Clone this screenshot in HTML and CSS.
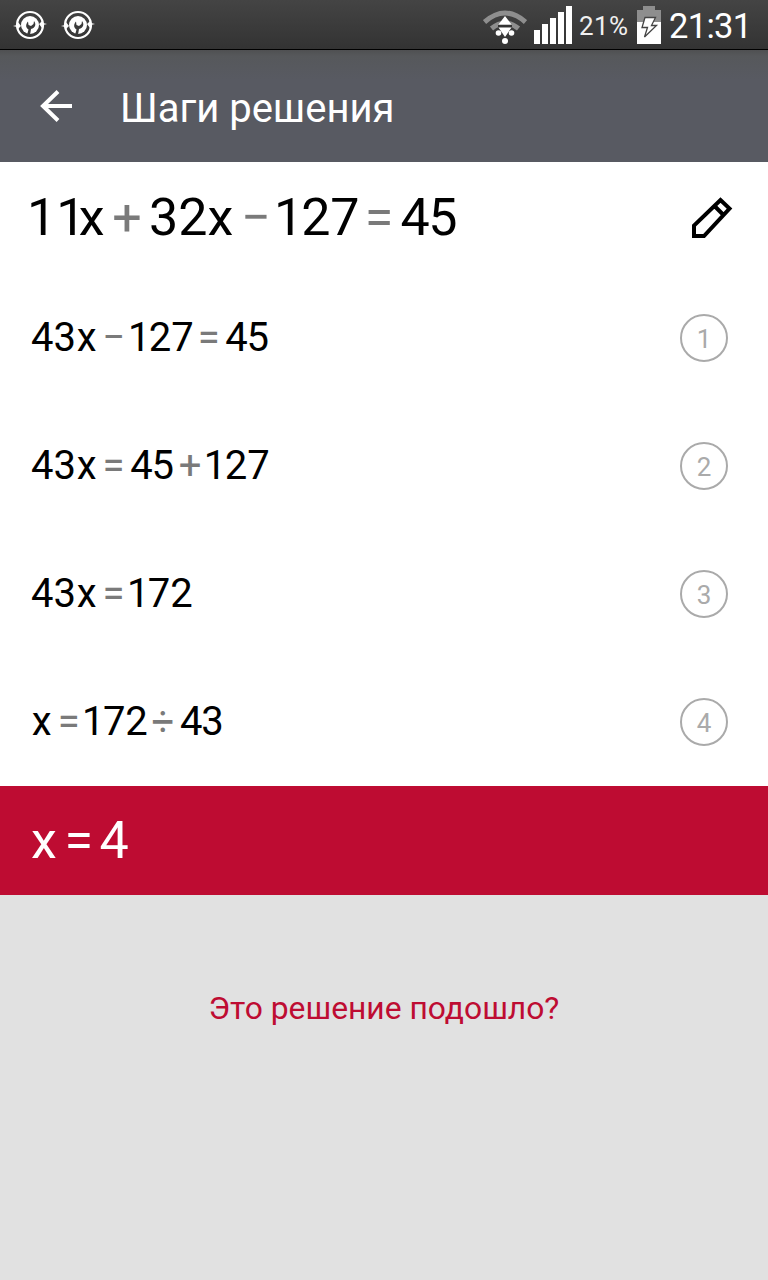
FILE: index.html
```html
<!DOCTYPE html>
<html lang="ru">
<head>
  <meta charset="UTF-8">
  <title>Шаги решения</title>
  <meta name="viewport" content="width=device-width, initial-scale=1.0">
  <link rel="stylesheet" href="styles.css">
</head>
<body>
  <div class="statusbar">
    <div class="notifications">
      <svg class="notif" viewBox="0 0 36 32" width="36" height="32">
        <circle cx="18" cy="16" r="13" fill="none" stroke="#fff" stroke-width="2.2"/>
        <path d="M1 17l4-1 1-3 3 4-3 3-1-2zM35 15l-4 1-1 3-3-4 3-3 1 2z" fill="#fff"/>
        <circle cx="18" cy="16" r="9" fill="#fff"/>
        <path d="M15 26l1.500-5.500c-3-2-3-5-.5-8l.5 3.500 2.500 1 2.500-2 .5-3c2.500 3 1.500 7-3 8l-1 6z" fill="#3a3a3a"/>
      </svg>
      <svg class="notif" viewBox="0 0 36 32" width="36" height="32">
        <circle cx="18" cy="16" r="13" fill="none" stroke="#fff" stroke-width="2.2"/>
        <path d="M1 17l4-1 1-3 3 4-3 3-1-2zM35 15l-4 1-1 3-3-4 3-3 1 2z" fill="#fff"/>
        <circle cx="18" cy="16" r="9" fill="#fff"/>
        <path d="M15 26l1.500-5.500c-3-2-3-5-.5-8l.5 3.500 2.500 1 2.500-2 .5-3c2.500 3 1.500 7-3 8l-1 6z" fill="#3a3a3a"/>
      </svg>
    </div>
    <div class="indicators">
      <svg class="wifi" viewBox="0 0 44 36" width="44" height="36">
        <path d="M1.500 14q20.500-18 41 0" fill="none" stroke="#8e8e8e" stroke-width="5"/>
        <path d="M8.500 20.500q13.500-11 27 0" fill="none" stroke="#8e8e8e" stroke-width="5"/>
        <path d="M22 8l6.500 8.500h-13zM22 29l-6.500-9.500h13z" fill="#fff"/>
        <path d="M15 17h14v2h-14z" fill="#333"/>
        <circle cx="15.500" cy="25" r="2.800" fill="#fff"/>
        <circle cx="28.500" cy="25" r="2.800" fill="#fff"/>
        <circle cx="22" cy="33" r="3" fill="#fff"/>
      </svg>
      <svg class="signal" viewBox="0 0 38 38" width="38" height="38">
        <path d="M0 24h6v14H0zM8 18h6v20H8zM16 12h6v26h-6zM24 6h6v32h-6zM32 0h6v38h-6z" fill="#fff"/>
      </svg>
      <span class="percent">21%</span>
      <svg class="battery" viewBox="0 0 24 38" width="24" height="38">
        <path d="M6 0h12v4h6v12H0V4h6z" fill="#8e8e8e"/>
        <path d="M0 16h24v22H0z" fill="#fff"/>
        <path d="M8 11.500h10.500l-4 8h5L7.500 31l3-9.500H5z" fill="#fff" stroke="#444" stroke-width="1.300"/>
      </svg>
      <span class="clock">21:31</span>
    </div>
  </div>

  <header class="toolbar">
    <svg class="back" viewBox="0 0 32 32" width="32" height="32">
      <path d="M18 1.500L3 16l15 14.500M2.500 16H32" fill="none" stroke="#fff" stroke-width="4"/>
    </svg>
    <h1>Шаги решения</h1>
  </header>

  <main>
    <div class="problem">
      <div class="expr"><span>1<b class="tight">1</b>x</span><i class="op plus">+</i><span>32x</span><i class="op before-one">−</i><span><b class="one">1</b>27</span><i class="op after-seven">=</i><span class="narrow">45</span></div>
      <svg class="edit" viewBox="0 0 42 42" width="42" height="42">
        <path d="M3 39V28.500L29.500 3l9 8.500L13 39zM23.500 9l9 9" fill="none" stroke="#000" stroke-width="4"/>
      </svg>
    </div>
    <div class="step">
      <div class="expr"><span>43<b class="var">x</b></span><i class="op before-one">−</i><span><b class="one">1</b>27</span><i class="op after-seven">=</i><span class="narrow">45</span></div>
      <div class="num">1</div>
    </div>
    <div class="step">
      <div class="expr"><span>43<b class="var">x</b></span><i class="op">=</i><span class="narrow">45</span><i class="op before-one">+</i><span><b class="one">1</b>27</span></div>
      <div class="num">2</div>
    </div>
    <div class="step">
      <div class="expr"><span>43<b class="var">x</b></span><i class="op before-one">=</i><span><b class="one">1</b>72</span></div>
      <div class="num">3</div>
    </div>
    <div class="step">
      <div class="expr"><span><b class="var">x</b></span><i class="op before-one">=</i><span><b class="one">1</b>72</span><i class="op div">÷</i><span class="narrow">43</span></div>
      <div class="num">4</div>
    </div>
    <div class="result">
      <div class="expr"><span>x</span><i class="op">=</i><span>4</span></div>
    </div>
  </main>

  <a class="feedback">Это решение подошло?</a>
</body>
</html>
```
FILE: styles.css
```css
* {
  box-sizing: border-box;
}
body {
  margin: 0;
  background: #e1e1e1;
  font-family: Roboto, "Noto Sans", sans-serif;
  color: #000;
}
svg {
  display: block;
  flex: none;
}

/* status bar */
.statusbar {
  height: 50px;
  display: flex;
  justify-content: space-between;
  background: linear-gradient(#444, #333);
  border-bottom: 1px solid #000;
  color: #fff;
}
.notifications {
  display: flex;
  gap: 12px;
  padding: 9px 0 0 12px;
}
.indicators {
  display: flex;
  padding: 6px 0 0;
}
.wifi {
  margin: 2px 7px 0 0;
}
.percent {
  width: 50px;
  font-size: 26px;
  line-height: 41px;
  letter-spacing: .4px;
  margin-left: 7px;
  color: #f0f0f0;
}
.battery {
  margin-left: 8px;
}
.clock {
  width: 99px;
  font-size: 34.5px;
  line-height: 41px;
  letter-spacing: -.7px;
  margin-left: 8px;
}

/* toolbar */
.toolbar {
  height: 112px;
  display: flex;
  align-items: center;
  padding-left: 40px;
  background: linear-gradient(#4f5052 0, #56585b 6px, #585a62 30px);
  color: #fff;
}
.toolbar h1 {
  margin: 4px 0 0 48px;
  font-size: 40px;
  font-weight: 400;
}

/* solution */
main {
  background: #fff;
}
.problem,
.step,
.result {
  display: flex;
  align-items: center;
  justify-content: space-between;
  padding: 0 40px 0 31px;
}
.problem {
  height: 112px;
  padding: 0 35px 0 27px;
  font-size: 52px;
}
.step {
  height: 128px;
  font-size: 40px;
}
.result {
  height: 109px;
  background: #be0c32;
  color: #fff;
  font-size: 52px;
}
.expr {
  display: flex;
  line-height: 1;
}
.expr b {
  font-weight: 400;
}
.one {
  letter-spacing: -.04em;
}
.tight {
  letter-spacing: -.13em;
}
.var {
  margin-left: .02em;
}
.narrow {
  letter-spacing: -.03em;
}
.op {
  font-style: normal;
  color: #7a7a7a;
  margin: 0 .14em 0 .15em;
}
.before-one {
  margin-right: .06em;
}
.after-seven {
  margin-left: .1em;
}
.div {
  margin-left: .09em;
}
.result .op {
  color: #fff;
  margin-right: .12em;
}
.num {
  width: 48px;
  height: 48px;
  border: 2px solid #aaa;
  border-radius: 50%;
  color: #aaa;
  font-size: 26px;
  line-height: 46px;
  text-align: center;
}

.feedback {
  display: block;
  margin-top: 94px;
  font-size: 31.8px;
  line-height: 38px;
  text-align: center;
  color: #be0c32;
}
```
